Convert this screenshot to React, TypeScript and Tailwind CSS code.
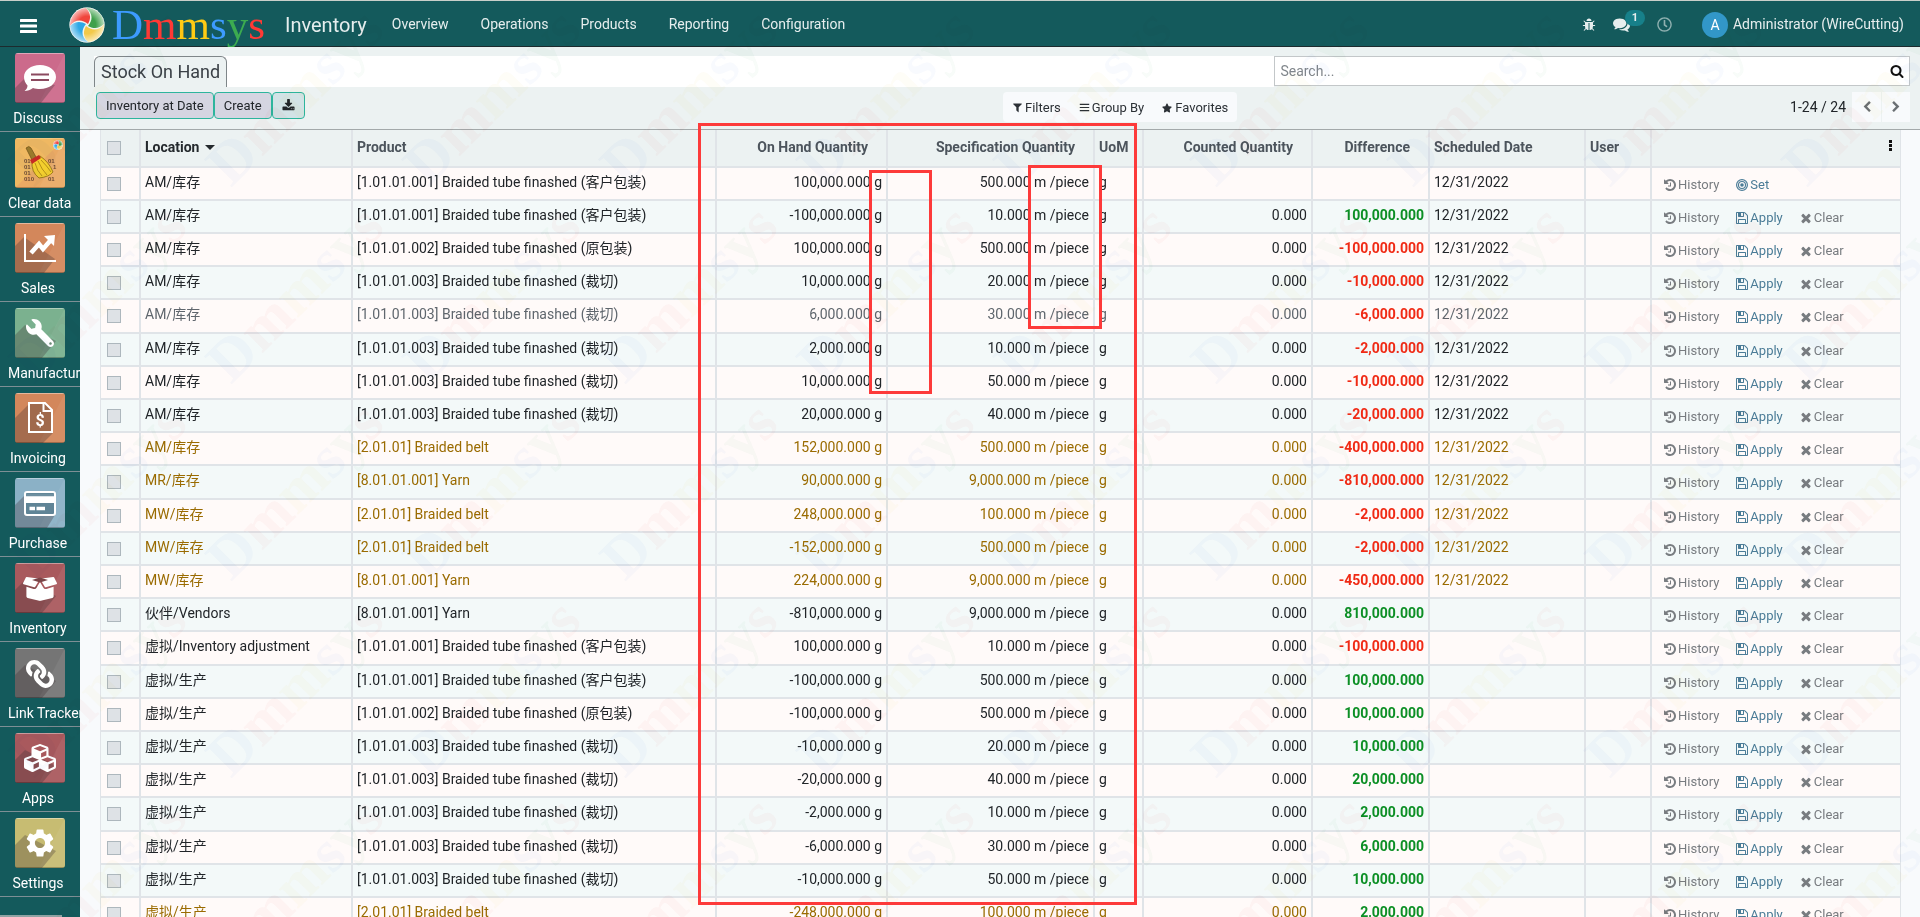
import type { ReactNode } from 'react';
import { FaBoxOpen, FaCubes, FaLink, FaRegClock, FaStar, FaWrench } from 'react-icons/fa';
import { MdSettings } from 'react-icons/md';
import clsx from 'clsx';

type Tone = 'normal' | 'muted' | 'warning';

interface Quant {
  location: string;
  product: string;
  onHand: string;
  spec: string;
  counted?: string;
  diff?: string;
  date?: string;
  tone: Tone;
}

const CUSTOMER = '[1.01.01.001] Braided tube finashed (客户包装)';
const ORIGINAL = '[1.01.01.002] Braided tube finashed (原包装)';
const CUT = '[1.01.01.003] Braided tube finashed (裁切)';
const BELT = '[2.01.01] Braided belt';
const YARN = '[8.01.01.001] Yarn';
const DAY = '12/31/2022';

function q(
  location: string,
  product: string,
  onHand: string,
  spec: string,
  diff?: string,
  date?: string,
  tone: Tone = 'normal',
): Quant {
  return { location, product, onHand, spec, diff, date, tone, counted: diff ? '0.000' : undefined };
}

const QUANTS: Quant[] = [
  q('AM/库存', CUSTOMER, '100,000.000', '500.000', undefined, DAY),
  q('AM/库存', CUSTOMER, '-100,000.000', '10.000', '100,000.000', DAY),
  q('AM/库存', ORIGINAL, '100,000.000', '500.000', '-100,000.000', DAY),
  q('AM/库存', CUT, '10,000.000', '20.000', '-10,000.000', DAY),
  q('AM/库存', CUT, '6,000.000', '30.000', '-6,000.000', DAY, 'muted'),
  q('AM/库存', CUT, '2,000.000', '10.000', '-2,000.000', DAY),
  q('AM/库存', CUT, '10,000.000', '50.000', '-10,000.000', DAY),
  q('AM/库存', CUT, '20,000.000', '40.000', '-20,000.000', DAY),
  q('AM/库存', BELT, '152,000.000', '500.000', '-400,000.000', DAY, 'warning'),
  q('MR/库存', YARN, '90,000.000', '9,000.000', '-810,000.000', DAY, 'warning'),
  q('MW/库存', BELT, '248,000.000', '100.000', '-2,000.000', DAY, 'warning'),
  q('MW/库存', BELT, '-152,000.000', '500.000', '-2,000.000', DAY, 'warning'),
  q('MW/库存', YARN, '224,000.000', '9,000.000', '-450,000.000', DAY, 'warning'),
  q('伙伴/Vendors', YARN, '-810,000.000', '9,000.000', '810,000.000'),
  q('虚拟/Inventory adjustment', CUSTOMER, '100,000.000', '10.000', '-100,000.000'),
  q('虚拟/生产', CUSTOMER, '-100,000.000', '500.000', '100,000.000'),
  q('虚拟/生产', ORIGINAL, '-100,000.000', '500.000', '100,000.000'),
  q('虚拟/生产', CUT, '-10,000.000', '20.000', '10,000.000'),
  q('虚拟/生产', CUT, '-20,000.000', '40.000', '20,000.000'),
  q('虚拟/生产', CUT, '-2,000.000', '10.000', '2,000.000'),
  q('虚拟/生产', CUT, '-6,000.000', '30.000', '6,000.000'),
  q('虚拟/生产', CUT, '-10,000.000', '50.000', '10,000.000'),
  q('虚拟/生产', BELT, '-248,000.000', '100.000', '2,000.000', undefined, 'warning'),
];

const TONES: Record<Tone, string> = {
  normal: 'text-[#212529]',
  muted: 'text-[#5f666d]',
  warning: 'text-[#9a6b01]',
};

// 1792-unit glyphs
const GLYPHS = {
  search:
    'M1216 832q0-185-131.5-316.5t-316.5-131.5-316.5 131.5-131.5 316.5 131.5 316.5 316.5 131.5 316.5-131.5 131.5-316.5zm512 832q0 52-38 90t-90 38q-54 0-90-38l-343-342q-179 124-399 124-143 0-273.5-55.5t-225-150-150-225-55.5-273.5 55.5-273.5 150-225 225-150 273.5-55.5 273.5 55.5 225 150 150 225 55.5 273.5q0 220-124 399l343 343q37 37 37 90z',
  download:
    'M1344 1344q0-26-19-45t-45-19-45 19-19 45 19 45 45 19 45-19 19-45zm256 0q0-26-19-45t-45-19-45 19-19 45 19 45 45 19 45-19 19-45zm128-224v320q0 40-28 68t-68 28h-1472q-40 0-68-28t-28-68v-320q0-40 28-68t68-28h465l135 136q58 56 136 56t136-56l136-136h464q40 0 68 28t28 68zm-325-569q17 41-14 70l-448 448q-18 19-45 19t-45-19l-448-448q-31-29-14-70 17-39 59-39h256v-448q0-26 19-45t45-19h256q26 0 45 19t19 45v448h256q42 0 59 39z',
  save: 'M512 1536h768v-384h-768v384zm896 0h128v-896q0-14-10-38.5t-20-34.5l-281-281q-10-10-34-20t-39-10v416q0 40-28 68t-68 28h-576q-40 0-68-28t-28-68v-416h-128v1280h128v-416q0-40 28-68t68-28h832q40 0 68 28t28 68v416zm-384-928v-320q0-13-9.5-22.5t-22.5-9.5h-192q-13 0-22.5 9.5t-9.5 22.5v320q0 13 9.5 22.5t22.5 9.5h192q13 0 22.5-9.5t9.5-22.5zm640 32v928q0 40-28 68t-68 28h-1344q-40 0-68-28t-28-68v-1344q0-40 28-68t68-28h928q40 0 88 20t76 48l280 280q28 28 48 76t20 88z',
  times:
    'M1490 1322q0 40-28 68l-136 136q-28 28-68 28t-68-28l-294-294-294 294q-28 28-68 28t-68-28l-136-136q-28-28-28-68t28-68l294-294-294-294q-28-28-28-68t28-68l136-136q28-28 68-28t68 28l294 294 294-294q28-28 68-28t68 28l136 136q28 28 28 68t-28 68l-294 294 294 294q28 28 28 68z',
  history:
    'M1664 896q0 156-61 298t-164 245-245 164-298 61q-172 0-327-72.5t-264-204.5q-7-10-6.5-22.5t8.5-20.5l137-138q10-9 25-9 16 2 23 12 73 95 179 147t225 52q104 0 198.5-40.5t163.5-109.5 109.5-163.5 40.5-198.5-40.5-198.5-109.5-163.5-163.5-109.5-198.5-40.5q-98 0-188 35.5t-160 101.5l137 138q31 30 14 69-17 40-59 40h-448q-26 0-45-19t-19-45v-448q0-42 40-59 39-17 69 14l130 129q107-101 244.5-156.5t284.5-55.5q156 0 298 61t245 164 164 245 61 298zm-640-288v448q0 14-9 23t-23 9h-320q-14 0-23-9t-9-23v-64q0-14 9-23t23-9h224v-352q0-14 9-23t23-9h64q14 0 23 9t9 23z',
  left: 'M1427 301l-531 531 531 531q19 19 19 45t-19 45l-166 166q-19 19-45 19t-45-19l-742-742q-19-19-19-45t19-45l742-742q19-19 45-19t45 19l166 166q19 19 19 45t-19 45z',
  right:
    'M1363 877l-742 742q-19 19-45 19t-45-19l-166-166q-19-19-19-45t19-45l531-531-531-531q-19-19-19-45t19-45l166-166q19-19 45-19t45 19l742 742q19 19 19 45t-19 45z',
  filter:
    'M1595 295q17 41-14 70l-493 493v742q0 42-39 59-13 5-25 5-27 0-45-19l-256-256q-19-19-19-45v-486l-493-493q-31-29-14-70 17-39 59-39h1280q42 0 59 39z',
  bars: 'M128 288h1536v192H128zM128 800h1536v192H128zM128 1312h1536v192H128z',
  comments:
    'M1408 768q0 139-94 257t-256.5 186.5-353.5 68.5q-86 0-176-16-124 88-278 128-36 9-86 16h-3q-11 0-20.5-8t-11.5-21q-1-3-1-6.5t.5-6.5 2-6l2.5-5 3.5-5.5 4-5 4.5-5 4-4.5q5-6 23-25t26-29.5 22.5-29 25-38.5 20.5-44q-124-72-195-177t-71-224q0-139 94-257t256.5-186.5 353.5-68.5 353.5 68.5 256.5 186.5 94 257zm384 256q0 120-71 224.5t-195 176.5q10 24 20.5 44t25 38.5 22.5 29 26 29.5 23 25q1 1 4 4.5t4.5 5 4 5 3.5 5.5l2.5 5 2 6 .5 6.5-1 6.5q-3 14-13 22t-22 7q-50-7-86-16-154-40-278-128-90 16-176 16-271 0-472-132 58 4 88 4 161 0 309-45t264-129q125-92 192-212t67-254q0-77-23-152 129 71 204 178t75 230z',
  bug: 'M1696 960q0 26-19 45t-45 19h-224q0 171-67 290l208 209q19 19 19 45t-19 45q-18 19-45 19t-45-19l-198-197q-5 5-15 13t-42 28.5-65 36.5-82 29-97 13v-896h-128v896q-51 0-101.5-13.5t-87-33-66-39-43.5-32.5l-15-14-183 207q-20 21-48 21-24 0-43-16-19-18-20.5-44.5t15.5-46.5l202-227q-58-114-58-274h-224q-26 0-45-19t-19-45 19-45 45-19h224v-294l-173-173q-19-19-19-45t19-45 45-19 45 19l173 173h844l173-173q19-19 45-19t45 19 19 45-19 45l-173 173v294h224q26 0 45 19t19 45zm-480-576h-640q0-133 93.5-226.5t226.5-93.5 226.5 93.5 93.5 226.5z',
};

function Glyph({ name, className }: { name: keyof typeof GLYPHS; className?: string }) {
  return (
    <svg viewBox="0 0 1792 1792" fill="currentColor" aria-hidden className={clsx('shrink-0', className)}>
      <path d={GLYPHS[name]} />
    </svg>
  );
}

function Target() {
  return (
    <svg viewBox="0 0 14 14" fill="none" stroke="currentColor" aria-hidden className="size-3.5 shrink-0">
      <circle cx="7" cy="7" r="5.4" strokeWidth="1.2" />
      <circle cx="7" cy="7" r="3.5" strokeWidth="1.1" />
      <circle cx="7" cy="7" r="1.8" fill="currentColor" stroke="none" />
    </svg>
  );
}

const BLADE = 'M1 19A17 17 0 0 1 17 1C22 6 22 12 19 17C13 12 6 12 1 19Z';

function Ball() {
  return (
    <>
      <defs>
        <radialGradient id="gloss" cx="0.5" cy="0.5" r="0.5">
          <stop offset="0.5" stopColor="#fff" stopOpacity="0" />
          <stop offset="1" stopColor="#fff" stopOpacity="0.65" />
        </radialGradient>
      </defs>
      <circle cx="18" cy="18" r="17.5" fill="#f1f4ee" />
      <path d={BLADE} fill="#f0453c" />
      <path d={BLADE} fill="#3fa04b" transform="rotate(90 18 18)" />
      <path d={BLADE} fill="#f2c94a" transform="rotate(180 18 18)" />
      <path d={BLADE} fill="#2fa8e6" transform="rotate(270 18 18)" />
      <circle cx="18" cy="18" r="17.5" fill="url(#gloss)" />
    </>
  );
}

// ---- sidebar tiles

interface TileProps {
  color: string;
  shadow?: string;
  children: ReactNode;
}

function Tile({ color, shadow = 'M10 17L0 27V50H27L41 33Z', children }: TileProps) {
  return (
    <svg viewBox="0 0 50 50" aria-hidden className="ml-[15px] size-[50px] rounded-[3px]">
      <rect width="50" height="50" fill={color} />
      <path d="M50 0V50H24Z" fill="#fff" opacity="0.06" />
      <path d={shadow} fill="#3d2f33" opacity="0.3" />
      <path d="M0 .5H50" stroke="#fff" opacity="0.4" />
      <path d="M0 49.5H50" stroke="#000" opacity="0.25" />
      {children}
    </svg>
  );
}

const APPS: { label: string; tile: ReactNode }[] = [
  {
    label: 'Discuss',
    tile: (
      <Tile color="#cc6a8b" shadow="M9 26L0 35V50H26L40 32Z">
        <path
          d="M25 12C34 12 41 17 41 24S34 36 25 36C22.500 36 20 35.600 18 35C15.500 37 12.500 38 9.500 38C11.500 36.500 12.500 34.500 12.500 32.500C10.500 30.300 9 27.500 9 24C9 17 16 12 25 12Z"
          fill="#fff"
        />
        <path d="M16 21.500H34M16 27H34" stroke="#8b4a60" strokeWidth="1.800" />
      </Tile>
    ),
  },
  {
    label: 'Clear data',
    tile: (
      <Tile color="#eaa964" shadow="M0 0Z">
        <path d="M0 0H50L0 50Z" fill="#f4c860" opacity="0.5" />
        <g fontFamily="Liberation Sans" fontSize="6" fontWeight="700" fill="#6b4a35">
          <text x="9" y="25">01</text>
          <text x="9" y="31">01</text>
          <text x="9" y="37">01</text>
          <text x="9" y="43">010</text>
          <text x="33" y="25">01</text>
          <text x="38" y="31">1</text>
          <text x="33" y="43">01</text>
        </g>
        <path d="M11 10Q14 7 16 10L21 19L17 22Z" fill="#9a7a2c" stroke="#6b4f17" strokeWidth=".7" />
        <path d="M17 23L25 18Q34 24 38 34Q34 39 24 40Q16 34 17 23Z" fill="#f3cf2e" stroke="#8a6a10" strokeWidth=".8" />
        <path d="M20 25Q22 33 27 38M23 23Q27 32 32 37M26 22Q32 28 36 34" fill="none" stroke="#a57f12" strokeWidth=".8" />
        <path d="M15 22L24 17L26 20L17 26Z" fill="#c72a24" />
        <svg x="38" y="2" width="10" height="10" viewBox="0 0 36 36">
          <Ball />
        </svg>
      </Tile>
    ),
  },
  {
    label: 'Sales',
    tile: (
      <Tile color="#d3875b" shadow="M9 14L0 23V50H29L40 36Z">
        <path d="M10 11V38H41" fill="none" stroke="#fff" strokeWidth="2" />
        <path d="M16 30L24 21L28 26L35 18" fill="none" stroke="#fff" strokeWidth="4.500" />
        <path d="M29 13L40 12L39 23Z" fill="#fff" />
      </Tile>
    ),
  },
  {
    label: 'Manufacturing',
    tile: (
      <Tile color="#7bb18f">
        <g transform="matrix(-1 0 0 1 50 0)">
          <FaWrench size={28} x={11} y={11} color="#fff" />
        </g>
      </Tile>
    ),
  },
  {
    label: 'Invoicing',
    tile: (
      <Tile color="#d3875b" shadow="M13 12L0 25V50H28L38 40Z">
        <path d="M14 10H30L37 17V39H14Z" fill="#a06a4c" stroke="#fff" strokeWidth="2" />
        <path d="M28.500 10V18H37" fill="none" stroke="#fff" strokeWidth="2" />
        <text x="25" y="33" textAnchor="middle" fontFamily="Roboto" fontSize="16" fontWeight="700" fill="#fff">
          $
        </text>
      </Tile>
    ),
  },
  {
    label: 'Purchase',
    tile: (
      <Tile color="#8bb1c6" shadow="M9 18L0 27V50H32L40 37Z">
        <rect x="10" y="14" width="30" height="23" rx="2" fill="#5f8496" stroke="#fff" strokeWidth="2" />
        <path d="M10 21.500H40" stroke="#fff" strokeWidth="7" />
        <path d="M11 17H39" stroke="#6d8fa0" strokeWidth="2.400" />
        <path d="M14.500 30.500H20M21.500 30.500H30" stroke="#fff" strokeWidth="3.500" />
      </Tile>
    ),
  },
  {
    label: 'Inventory',
    tile: (
      <Tile color="#a9595d">
        <FaBoxOpen size={34} x={8} y={9} color="#fff" />
        <path d="M17 17L25 14.500L33 17L25 19.500Z" fill="#7a4548" />
      </Tile>
    ),
  },
  {
    label: 'Link Tracker',
    tile: (
      <Tile color="#757575">
        <g transform="matrix(-1 0 0 1 50 0)">
          <FaLink size={28} x={11} y={12} color="#fff" />
        </g>
      </Tile>
    ),
  },
  {
    label: 'Apps',
    tile: (
      <Tile color="#a9595d">
        <FaCubes size={32} x={9} y={9} color="#fff" />
      </Tile>
    ),
  },
  {
    label: 'Settings',
    tile: (
      <Tile color="#c7bc72">
        <MdSettings size={34} x={8} y={8} color="#fff" />
      </Tile>
    ),
  },
];

function Sidebar() {
  return (
    <nav className="flex w-20 shrink-0 flex-col overflow-hidden bg-[#145a5c]">
      {APPS.map((app) => (
        <a key={app.label} href="#" className="block h-[85px] shrink-0 border-b border-[#7d8f95] pt-1.5">
          {app.tile}
          <span className="mt-[5px] flex h-5 pr-3 pl-2 text-[14px] leading-5 whitespace-nowrap text-white">
            <span className="mx-auto">{app.label}</span>
          </span>
        </a>
      ))}
      <div className="mt-auto h-0.5 w-[62px] shrink-0 bg-[#8fa3a3]" />
    </nav>
  );
}

const MENU = ['Overview', 'Operations', 'Products', 'Reporting', 'Configuration'];

function Header() {
  return (
    <header className="flex h-[47px] shrink-0 items-center border-t border-b border-t-[#c9cfca] border-b-[#1c2b2e] bg-[#145a5c] pt-0.5 pr-4 text-[14px] text-[#e6eeee]">
      <button type="button" aria-label="Toggle menu" className="ml-[18px] pt-0.5 text-white">
        <svg viewBox="0 0 17 14" aria-hidden className="ml-0.5 h-3.5 w-[17px]" fill="currentColor">
          <rect width="17" height="3" rx=".5" />
          <rect y="5.500" width="17" height="3" rx=".5" />
          <rect y="11" width="17" height="3" rx=".5" />
        </svg>
      </button>
      <a href="#" className="ml-8 flex items-center">
        <svg viewBox="0 0 36 36" aria-hidden className="size-9">
          <Ball />
        </svg>
        <span className="ml-[7px] font-['Liberation_Serif',serif] text-[43px] leading-[43px]">
          <span className="text-[#3d9bff]">D</span>
          <span className="text-[#ff3a35]">m</span>
          <span className="text-[#ffcb14]">m</span>
          <span className="text-[#3d9bff]">s</span>
          <span className="text-[#3cab50]">y</span>
          <span className="text-[#ff3a35]">s</span>
        </span>
      </a>
      <a href="#" className="ml-5 text-[20px]">
        Inventory
      </a>
      <nav className="ml-[9px] flex">
        {MENU.map((item) => (
          <a key={item} href="#" className="px-4 py-3">
            {item}
          </a>
        ))}
      </nav>
      <div className="ml-auto flex items-center">
        <button type="button" aria-label="Debug">
          <Glyph name="bug" className="size-3.5" />
        </button>
        <button type="button" aria-label="Messages" className="relative ml-[17px]">
          <Glyph name="comments" className="size-[17px]" />
          <span className="absolute -top-1.5 left-3 h-4 w-5 rounded-full bg-[#17808a] text-center text-[11px] leading-4 font-bold">
            1
          </span>
        </button>
        <button type="button" aria-label="Activities" className="ml-[27px] text-[#8fb0b0]">
          <FaRegClock size={15} />
        </button>
        <button type="button" className="ml-[30px] flex items-center gap-[5px]">
          <span className="size-[26px] rounded-full bg-[#3297c8] text-center leading-[26px] text-white">A</span>
          Administrator (WireCutting)
        </button>
      </div>
    </header>
  );
}

function ControlPanel() {
  return (
    <div className="shrink-0 border-b border-[#a3a9aa] bg-[#ecf2f2] pt-[9px] pr-2.5 pl-3.5">
      <div className="flex h-[31px]">
        <div className="flex flex-1 bg-white">
          <h1 className="h-[31px] rounded-t-md border border-b-0 border-[#7f8689] bg-[#ecf2f2] px-1.5 text-[18px] leading-[30px] text-[#3b4147]">
            Stock On Hand
          </h1>
        </div>
        <label className="flex h-[30px] w-[35%] items-center border border-[#c3c7c9] bg-white pr-[5px]">
          <input
            type="text"
            placeholder="Search..."
            aria-label="Search"
            className="h-7 min-w-0 flex-1 px-[5px] text-[14px] outline-none placeholder:text-[#80868b]"
          />
          <Glyph name="search" className="size-3.5 text-[#111]" />
        </label>
      </div>
      <div className="flex h-[42px] items-start pt-[5px]">
        <div className="ml-0.5 flex flex-1 text-[13px] text-[#212529]">
          <button type="button" className="h-[27px] rounded-[4px] border border-[#2db59d] bg-[#d5d5e1] px-[9px]">
            Inventory at Date
          </button>
          <button type="button" className="h-[27px] rounded-[4px] border border-[#2db59d] bg-[#d5d5e1] px-[9px]">
            Create
          </button>
          <button
            type="button"
            aria-label="Export"
            className="h-[27px] rounded-[4px] border border-[#2db59d] bg-[#d2e3e6] px-[9px]"
          >
            <Glyph name="download" className="size-[13px]" />
          </button>
        </div>
        <div className="flex flex-1 items-start justify-between">
          <div className="flex h-[30px] rounded-[4px] bg-[#f8fafc] pt-px text-[13px] text-[#2c3136]">
            <button type="button" className="flex items-center gap-0.5 px-[9px]">
              <Glyph name="filter" className="size-[11px]" />
              Filters
            </button>
            <button type="button" className="flex items-center gap-0.5 px-[9px]">
              <Glyph name="bars" className="size-[11px]" />
              Group By
            </button>
            <button type="button" className="flex items-center gap-[3px] px-[9px]">
              <FaStar size={10} />
              Favorites
            </button>
          </div>
          <div className="flex h-[30px] items-center text-[14px] text-[#212529]">
            <span className="mr-1.5">1-24 / 24</span>
            <button
              type="button"
              aria-label="Previous"
              className="flex h-full w-[29px] items-center justify-center bg-[#f8fafc] text-[#6b7074]"
            >
              <Glyph name="left" className="size-3" />
            </button>
            <button
              type="button"
              aria-label="Next"
              className="flex h-full w-[29px] items-center justify-center border-l border-[#ecf2f2] bg-[#f8fafc] text-[#6b7074]"
            >
              <Glyph name="right" className="size-3" />
            </button>
          </div>
        </div>
      </div>
    </div>
  );
}

function Check({ label }: { label: string }) {
  return (
    <input
      type="checkbox"
      aria-label={label}
      className="ml-1.5 block size-3.5 appearance-none border border-[#adb7bd] bg-[#dee2e6]"
    />
  );
}

const CELL = 'border-r-2 border-b-2 border-[#e0e4e8] px-1 pb-1 align-middle whitespace-nowrap';
const NUM = 'border-r-2 border-b-2 border-[#e0e4e8] pr-1 pb-1 text-right align-middle whitespace-nowrap';
const HEAD = 'border-r-2 border-b-2 border-[#e0e4e8] px-1 pb-0.5 text-left';
const HEAD_NUM = 'border-r-2 border-b-2 border-[#e0e4e8] pr-[18px] pb-0.5 text-right whitespace-nowrap';

function QuantRow({ row }: { row: Quant }) {
  const negative = row.diff?.startsWith('-');
  return (
    <tr className="h-[33px] odd:bg-[#fffaf9] even:bg-[#f3f9f9] nth-[5n]:h-[34px]">
      <td className="border-r-2 border-b-2 border-l border-[#e0e4e8] align-middle">
        <Check label={`Select ${row.product}`} />
      </td>
      <td className={clsx(CELL, TONES[row.tone])}>{row.location}</td>
      <td className={clsx(CELL, TONES[row.tone])}>{row.product}</td>
      <td className={clsx(NUM, TONES[row.tone])}>{row.onHand} g</td>
      <td className={clsx(NUM, TONES[row.tone])}>{row.spec} m /piece</td>
      <td className={clsx(CELL, TONES[row.tone])}>g</td>
      <td className={clsx(NUM, TONES[row.tone])}>{row.counted}</td>
      <td className={clsx(NUM, 'font-bold', negative ? 'text-[#f02a15]' : 'text-[#0c8f25]')}>{row.diff}</td>
      <td className={clsx(CELL, TONES[row.tone])}>{row.date}</td>
      <td className={CELL} />
      <td className="border-r border-b-2 border-[#e0e4e8] pt-0.5 align-middle">
        <div className="flex gap-4 pl-[11px] text-[13px] leading-5 text-[#787c80]">
          <button type="button" className="flex items-center gap-px">
            <Glyph name="history" className="size-3.5" />
            History
          </button>
          <button type="button" className="flex items-center gap-px text-[#4b7c97]">
            {row.diff ? <Glyph name="save" className="size-3.5" /> : <Target />}
            {row.diff ? 'Apply' : 'Set'}
          </button>
          {row.diff && (
            <button type="button" className="flex items-center gap-px">
              <Glyph name="times" className="size-3.5" />
              Clear
            </button>
          )}
        </div>
      </td>
    </tr>
  );
}

function StockTable() {
  return (
    <table className="w-full table-fixed border-separate border-spacing-0 text-[14px] leading-5">
      <colgroup>
        <col className="w-[41px]" />
        <col className="w-[212px]" />
        <col />
        <col className="w-[171px]" />
        <col className="w-[207px]" />
        <col className="w-[49px]" />
        <col className="w-[169px]" />
        <col className="w-[117px]" />
        <col className="w-[156px]" />
        <col className="w-[66px]" />
        <col className="w-[249px]" />
      </colgroup>
      <thead>
        <tr className="h-[38px] bg-[#ecf2f2] text-[#4c545c]">
          <th className="border-r-2 border-b-2 border-l border-[#e0e4e8]">
            <Check label="Select all" />
          </th>
          <th className={clsx(HEAD, 'text-[#24292d]')}>
            <span className="flex items-center gap-1.5">
              Location
              <svg viewBox="0 0 10 5" aria-hidden className="h-[5px] w-2.5" fill="currentColor">
                <path d="M0 0H10L5 5Z" />
              </svg>
            </span>
          </th>
          <th className={HEAD}>Product</th>
          <th className={HEAD_NUM}>On Hand Quantity</th>
          <th className={HEAD_NUM}>Specification Quantity</th>
          <th className={HEAD}>UoM</th>
          <th className={HEAD_NUM}>Counted Quantity</th>
          <th className={HEAD_NUM}>Difference</th>
          <th className={HEAD}>Scheduled Date</th>
          <th className={HEAD}>User</th>
          <th className="border-r border-b-2 border-[#e0e4e8] pr-2 pb-1.5">
            <button type="button" aria-label="Optional columns" className="ml-auto block">
              <svg viewBox="0 0 3 11" aria-hidden className="h-[11px] w-[3px]" fill="#111">
                <path d="M0 0H3V3H0ZM0 4H3V7H0ZM0 8H3V11H0Z" />
              </svg>
            </button>
          </th>
        </tr>
      </thead>
      <tbody>
        {QUANTS.map((row, i) => (
          <QuantRow key={i} row={row} />
        ))}
      </tbody>
    </table>
  );
}

const STEP = 197;

function Watermark() {
  const marks: [number, number][] = [];
  for (let x = -1; x < 10; x++) {
    for (let y = 0; y < 6; y++) marks.push([34 + x * STEP, 188 + y * STEP]);
  }
  return (
    <svg aria-hidden className="pointer-events-none absolute inset-0 size-full opacity-[0.035] mix-blend-multiply">
      {marks.map(([x, y]) => (
        <text
          key={`${x}:${y}`}
          transform={`translate(${x} ${y}) rotate(-45)`}
          fontFamily="Liberation Serif"
          fontSize="60"
          fontWeight="700"
        >
          <tspan fill="#2b66d0">D</tspan>
          <tspan fill="#e02020">m</tspan>
          <tspan fill="#e0b010">m</tspan>
          <tspan fill="#2b66d0">s</tspan>
          <tspan fill="#209040">y</tspan>
          <tspan fill="#e02020">s</tspan>
        </text>
      ))}
    </svg>
  );
}

export default function App() {
  return (
    <div className="relative flex h-screen flex-col overflow-hidden bg-[#f8fafc] font-[Roboto,'Noto_Sans_CJK_SC',sans-serif]">
      <Header />
      <div className="flex min-h-0 flex-1">
        <Sidebar />
        <main className="flex min-w-0 flex-1 flex-col">
          <ControlPanel />
          <div className="min-h-0 flex-1 overflow-hidden pr-[19px] pl-5">
            <StockTable />
          </div>
        </main>
      </div>
      <Watermark />
      {/* review marks drawn over the quantity columns */}
      <div className="pointer-events-none absolute top-[123px] left-[698px] h-[782px] w-[439px] border-[3px] border-[#fd3a3a]" />
      <div className="pointer-events-none absolute top-[170px] left-[869px] h-[224px] w-[63px] border-[3px] border-[#fd3a3a]" />
      <div className="pointer-events-none absolute top-[165px] left-[1028px] h-[164px] w-[74px] border-[3px] border-[#fd3a3a]" />
    </div>
  );
}
